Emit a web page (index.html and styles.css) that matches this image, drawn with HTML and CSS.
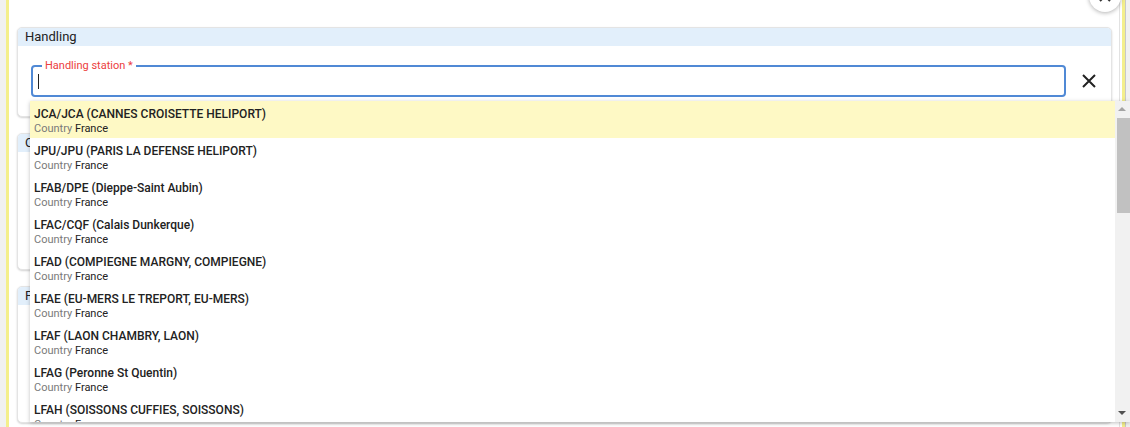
FILE: index.html
```html
<!DOCTYPE html>
<html>
<head>
	<meta charset="UTF-8">
	<title>Handling</title>
	<link rel="stylesheet" href="styles.css">
</head>
<body>
	<div class="page">
		<div class="side side-left"></div>
		<div class="rail"></div>
		<div class="content">
			<section class="card card-handling">
				<div class="card-head">Handling</div>
				<div class="card-body">
					<div class="field-row">
						<div class="field">
							<label class="field-label">Handling station *</label>
							<span class="caret"></span>
						</div>
						<button class="clear-btn" type="button">
							<svg width="16" height="16" viewBox="0 0 16 16"><path d="M2 2 L14 14 M14 2 L2 14" stroke="#222" stroke-width="2" fill="none"/></svg>
						</button>
					</div>
				</div>
			</section>
			<section class="card card-tall">
				<div class="card-head">Catering</div>
				<div class="card-body"></div>
			</section>
			<section class="card card-tall">
				<div class="card-head">Fuel</div>
				<div class="card-body"></div>
			</section>
		</div>
		<div class="gap"></div>
		<div class="rail"></div>
		<div class="side side-right"></div>

		<!-- dialog close button, mostly scrolled out of view -->
		<button class="close-round" type="button">
			<svg width="14" height="14" viewBox="0 0 14 14"><path d="M2 2 L12 12 M12 2 L2 12" stroke="#333" stroke-width="2" fill="none"/></svg>
		</button>

		<!-- autocomplete dropdown -->
		<div class="dropdown">
			<ul class="options">
				<li class="option active"><div class="opt-title">JCA/JCA (CANNES CROISETTE HELIPORT)</div><div class="opt-sub">Country <span>France</span></div></li>
				<li class="option"><div class="opt-title">JPU/JPU (PARIS LA DEFENSE HELIPORT)</div><div class="opt-sub">Country <span>France</span></div></li>
				<li class="option"><div class="opt-title">LFAB/DPE (Dieppe-Saint Aubin)</div><div class="opt-sub">Country <span>France</span></div></li>
				<li class="option"><div class="opt-title">LFAC/CQF (Calais Dunkerque)</div><div class="opt-sub">Country <span>France</span></div></li>
				<li class="option"><div class="opt-title">LFAD (COMPIEGNE MARGNY, COMPIEGNE)</div><div class="opt-sub">Country <span>France</span></div></li>
				<li class="option"><div class="opt-title">LFAE (EU-MERS LE TREPORT, EU-MERS)</div><div class="opt-sub">Country <span>France</span></div></li>
				<li class="option"><div class="opt-title">LFAF (LAON CHAMBRY, LAON)</div><div class="opt-sub">Country <span>France</span></div></li>
				<li class="option"><div class="opt-title">LFAG (Peronne St Quentin)</div><div class="opt-sub">Country <span>France</span></div></li>
				<li class="option"><div class="opt-title">LFAH (SOISSONS CUFFIES, SOISSONS)</div><div class="opt-sub">Country <span>France</span></div></li>
			</ul>
			<div class="scrollbar">
				<div class="sb-arrow sb-up"></div>
				<div class="sb-track"><div class="sb-thumb"></div></div>
				<div class="sb-arrow sb-down"></div>
			</div>
		</div>
	</div>
</body>
</html>
```
FILE: styles.css
```css
html, body {
	margin: 0;
	padding: 0;
	height: 100%;
	overflow: hidden;
	background: #fff;
	font-family: Roboto, "Liberation Sans", sans-serif;
	color: #222;
}
.page {
	position: relative;
	display: flex;
	height: 427px;
}
.side {
	background: #f1f1f1;
}
.side-left {
	width: 6px;
}
.side-right {
	width: 4px;
	border-left: 1px solid #c8c8c8;
}
.rail {
	width: 3px;
	background: #f4ef8c;
}
.gap {
	width: 2px;
	background: #fff;
}
.content {
	flex: 1;
	background: #fff;
	border-right: 1px solid #e2e2e2;
	padding: 27px 7px 0 8px;
	display: flex;
	flex-direction: column;
	gap: 16px;
}
.card {
	border: 1px solid #e4e4e4;
	border-radius: 5px;
	box-shadow: 0 1px 2px rgba(0, 0, 0, 0.18);
	background: #fff;
	overflow: hidden;
}
.card-head {
	background: #e2effb;
	height: 18px;
	line-height: 18px;
	padding-left: 7px;
	font-size: 13px;
	color: #222;
}
.card-body {
	padding: 19px 14px 19px 13px;
}
.card-tall {
	height: 135px;
}
.field-row {
	display: flex;
	align-items: center;
}
.field {
	flex: 1;
	height: 32px;
	box-sizing: border-box;
	border: 2px solid #5089d5;
	border-radius: 4px;
	position: relative;
	display: flex;
	align-items: center;
	padding-left: 5px;
}
/* floating label sits on top of the border */
.field-label {
	position: absolute;
	left: 9px;
	top: -8px;
	background: #fff;
	padding: 0 3px;
	font-size: 11px;
	line-height: 13px;
	color: #ec4040;
}
.caret {
	display: block;
	width: 1px;
	height: 15px;
	background: #222;
}
.clear-btn {
	border: none;
	background: none;
	padding: 0;
	margin-left: 15px;
	width: 16px;
	height: 16px;
	cursor: pointer;
}
.close-round {
	position: absolute;
	left: 1089px;
	top: -20px;
	width: 32px;
	height: 32px;
	border-radius: 50%;
	border: none;
	background: #fff;
	box-shadow: 0 1px 4px rgba(0, 0, 0, 0.3);
	display: flex;
	align-items: center;
	justify-content: center;
	padding: 0;
}
.dropdown {
	position: absolute;
	left: 30px;
	top: 101px;
	width: 1100px;
	height: 321px;
	background: #fff;
	box-shadow: 0 1px 4px rgba(0, 0, 0, 0.25);
	display: flex;
}
.options {
	flex: 1;
	list-style: none;
	margin: 0;
	padding: 0;
	overflow: hidden;
}
.option {
	height: 37px;
	box-sizing: border-box;
	padding: 6px 4px 0;
}
.option.active {
	background: #fef9c5;
}
.opt-title {
	font-size: 12px;
	font-weight: 500;
	line-height: 15px;
	color: #222;
}
.opt-sub {
	font-size: 11px;
	line-height: 13px;
	color: #7a7a7a;
}
.opt-sub span {
	color: #222;
}
.scrollbar {
	width: 15px;
	background: #f1f1f1;
	display: flex;
	flex-direction: column;
}
.sb-arrow {
	height: 17px;
	position: relative;
}
.sb-up::after,
.sb-down::after {
	content: "";
	position: absolute;
	left: 3px;
	border-left: 4px solid transparent;
	border-right: 4px solid transparent;
}
.sb-up::after {
	top: 6px;
	border-bottom: 4px solid #a3a3a3;
}
.sb-down::after {
	top: 6px;
	border-top: 4px solid #505050;
}
.sb-track {
	flex: 1;
	padding-left: 2px;
}
.sb-thumb {
	height: 95px;
	background: #c1c1c1;
}
```
